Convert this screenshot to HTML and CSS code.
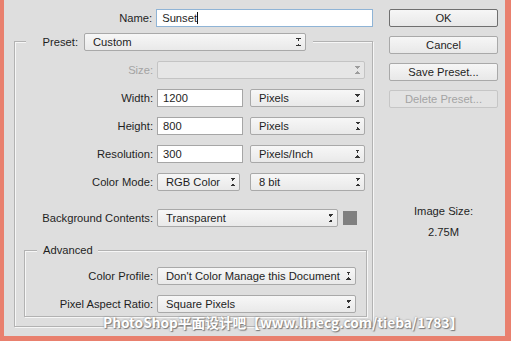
FILE: index.html
```html
<!DOCTYPE html>
<html lang="en">
<head>
    <meta charset="UTF-8">
    <title>New</title>
    <link rel="stylesheet" href="styles.css">
</head>
<body>
<div class="dialog">
    <div class="main">
        <div class="row name-row">
            <span class="lbl">Name:</span>
            <div class="field name-field">Sunset<span class="caret"></span></div>
        </div>

        <div class="group">
            <div class="preset">
                <span class="lbl preset-lbl">Preset:</span>
                <div class="select preset-sel">Custom<span class="arrows"></span></div>
            </div>

            <div class="row">
                <span class="lbl off">Size:</span>
                <div class="select off size-sel"><span class="arrows"></span></div>
            </div>
            <div class="row">
                <span class="lbl">Width:</span>
                <div class="field num">1200</div>
                <div class="select unit">Pixels<span class="arrows"></span></div>
            </div>
            <div class="row">
                <span class="lbl">Height:</span>
                <div class="field num">800</div>
                <div class="select unit">Pixels<span class="arrows"></span></div>
            </div>
            <div class="row">
                <span class="lbl">Resolution:</span>
                <div class="field num">300</div>
                <div class="select unit">Pixels/Inch<span class="arrows"></span></div>
            </div>
            <div class="row">
                <span class="lbl">Color Mode:</span>
                <div class="select mode">RGB Color<span class="arrows"></span></div>
                <div class="select unit bits">8 bit<span class="arrows"></span></div>
            </div>
            <div class="row bg-row">
                <span class="lbl">Background Contents:</span>
                <div class="select bg-sel">Transparent<span class="arrows"></span></div>
                <div class="swatch"></div>
            </div>

            <div class="advanced">
                <div class="adv-title">Advanced</div>
                <div class="row">
                    <span class="lbl">Color Profile:</span>
                    <div class="select wide">Don't Color Manage this Document<span class="arrows"></span></div>
                </div>
                <div class="row">
                    <span class="lbl">Pixel Aspect Ratio:</span>
                    <div class="select wide">Square Pixels<span class="arrows"></span></div>
                </div>
            </div>
        </div>
    </div>

    <div class="side">
        <div class="btn default">OK</div>
        <div class="btn">Cancel</div>
        <div class="btn">Save Preset...</div>
        <div class="btn off">Delete Preset...</div>
        <div class="img-size">
            <div>Image Size:</div>
            <div class="size-val">2.75M</div>
        </div>
    </div>

    <div class="watermark">PhotoShop平面设计吧【www.linecg.com/tieba/1783】</div>
</div>
</body>
</html>
```

FILE: styles.css
```css
body {
    margin: 0;
    background: #e9806e;
    font-family: "Liberation Sans", Arial, sans-serif;
    font-size: 11.2px;
    color: #1e1e1e;
}
.dialog {
    position: relative;
    display: flex;
    width: 501px;
    height: 336px;
    margin-left: 4px;
    background: #dedede;
    box-sizing: border-box;
    padding-top: 9px;
}
.main {
    width: 369px;
}
.row {
    display: flex;
    align-items: center;
    height: 18px;
    margin-top: 10px;
}
.lbl {
    width: 138px;
    margin-right: 4px;
    text-align: right;
    white-space: nowrap;
}
.off {
    color: #a3a3a3;
}
.name-row {
    margin-top: 0;
}
.name-row .lbl {
    width: 149px;
}
.field {
    height: 18px;
    line-height: 17px;
    box-sizing: border-box;
    padding-left: 5px;
    background: #fff;
    border: 1px solid #a6a6a6;
}
.name-field {
    width: 218px;
    border-color: #8fb4d6;
}
.caret {
    display: inline-block;
    width: 1px;
    height: 12px;
    background: #111;
    vertical-align: -2px;
}
.num {
    width: 86px;
    margin-right: 7px;
}
.select {
    position: relative;
    height: 18px;
    line-height: 17px;
    box-sizing: border-box;
    padding-left: 8px;
    border: 1px solid #a9a9a9;
    border-radius: 2px;
    background: linear-gradient(#f7f7f7, #e9e9e9);
    white-space: nowrap;
}
.arrows {
    position: absolute;
    right: 4px;
    top: 4px;
    width: 5px;
    height: 8px;
    background:
        linear-gradient(to top right, transparent 50%, #333 50%) 0 0 / 3px 3px no-repeat,
        linear-gradient(to top left, transparent 50%, #333 50%) 2px 0 / 3px 3px no-repeat,
        linear-gradient(to bottom right, transparent 50%, #333 50%) 0 5px / 3px 3px no-repeat,
        linear-gradient(to bottom left, transparent 50%, #333 50%) 2px 5px / 3px 3px no-repeat;
}
.select.off {
    background: #e6e6e6;
    border-color: #c4c4c4;
}
.select.off .arrows {
    opacity: 0.4;
}
.unit {
    width: 115px;
}
.mode {
    width: 83px;
    margin-right: 10px;
}
.size-sel {
    width: 208px;
}
.bg-row {
    margin-top: 18px;
}
.bg-sel {
    width: 181px;
    margin-right: 5px;
}
.swatch {
    width: 14px;
    height: 14px;
    background: #808080;
}
.wide {
    width: 199px;
}

/* group boxes */
.group {
    width: 359px;
    height: 286px;
    box-sizing: border-box;
    margin: 14px 0 0 10px;
    border: 1px solid #b2b2b2;
    box-shadow: inset 1px 1px 0 #f6f6f6, 1px 1px 0 #f6f6f6;
}
.preset {
    display: flex;
    align-items: center;
    width: fit-content;
    height: 18px;
    margin: -9px 0 0 11px;
    padding-right: 7px;
    background: #dedede;
}
.preset .preset-lbl {
    width: 52px;
    margin-right: 6px;
}
.preset-sel {
    width: 222px;
}
.advanced {
    width: 343px;
    height: 67px;
    box-sizing: border-box;
    margin: 23px 0 0 9px;
    border: 1px solid #b2b2b2;
    box-shadow: inset 1px 1px 0 #f6f6f6, 1px 1px 0 #f6f6f6;
}
.adv-title {
    width: fit-content;
    height: 14px;
    line-height: 14px;
    margin: -8px 0 0 12px;
    padding: 0 5px 0 6px;
    background: #dedede;
}
.advanced .row:first-of-type {
    margin-top: 6px;
}
.advanced .lbl {
    width: 128px;
}

/* right column */
.side {
    width: 109px;
    margin-left: 16px;
}
.btn {
    height: 18px;
    line-height: 16px;
    box-sizing: border-box;
    margin-bottom: 9px;
    text-align: center;
    border: 1px solid #a9a9a9;
    border-radius: 2px;
    background: linear-gradient(#f6f6f6, #e8e8e8);
}
.btn.default {
    border-color: #6f6f6f;
}
.btn.off {
    border-color: #c6c6c6;
    background: #e3e3e3;
}
.img-size {
    margin-top: 95px;
    text-align: center;
    line-height: 16px;
}
.size-val {
    margin-top: 5px;
}

.watermark {
    position: absolute;
    left: 99px;
    top: 312px;
    color: #fff;
    font-family: "Noto Sans CJK SC", sans-serif;
    font-weight: bold;
    font-size: 13.7px;
    text-shadow: 0 0 2px #8a8a8a, 1px 1px 1px #777;
    white-space: nowrap;
}
```
